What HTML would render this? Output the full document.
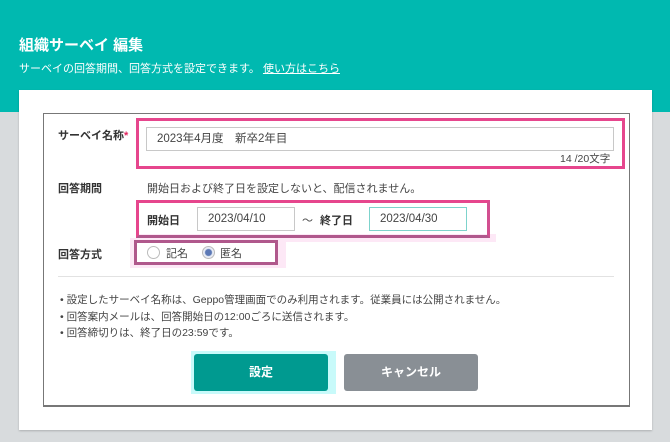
<!DOCTYPE html>
<html><head><meta charset="utf-8"><style>
*{margin:0;padding:0;box-sizing:border-box}
body{width:670px;height:442px;background:#d8dbdd;font-family:"Liberation Sans","Noto Sans CJK JP",sans-serif;position:relative;overflow:hidden;color:#333}
.abs{position:absolute}
.hdr{left:0;top:0;width:670px;height:112px;background:#00b9b0}
.card{left:19px;top:90px;width:633px;height:340px;background:#fff;box-shadow:0 1px 2px rgba(0,0,0,.2)}
.inner{left:43px;top:113px;width:587px;height:294px;border:1px solid #777;border-bottom-width:2px}
.lbl{font-size:11px;font-weight:bold;color:#333}
.txt{font-size:11px;color:#444}
.pink{border:3px solid #e6468d}
.pink2{border:3px solid #b0588c}
.inp{border:1px solid #c8c8c8;background:#fff;font-size:11.5px;color:#444;padding-left:10px;line-height:22px}
.radio{width:13px;height:13px;border-radius:50%;border:1px solid #bbb;background:#fff}
.btn{height:37px;border-radius:3px;color:#fff;font-weight:bold;font-size:12px;text-align:center;line-height:37px}
</style></head><body>
<div class="abs hdr"></div>
<div class="abs" style="left:19px;top:34px;color:#fff;font-weight:bold;font-size:15px">組織サーベイ 編集</div>
<div class="abs" style="left:19px;top:60px;color:#fff;font-size:11px">サーベイの回答期間、回答方式を設定できます。 <span style="text-decoration:underline">使い方はこちら</span></div>
<div class="abs card"></div>
<div class="abs inner"></div>
<div class="abs lbl" style="left:58px;top:127px">サーベイ名称<span style="color:#e0245e">*</span></div>
<div class="abs pink" style="left:136px;top:118px;width:489px;height:51px"></div>
<div class="abs inp" style="left:146px;top:127px;width:468px;height:24px">2023年4月度　新卒2年目</div>
<div class="abs txt" style="left:560px;top:151px;font-size:10.5px">14 /20文字</div>
<div class="abs lbl" style="left:58px;top:180px">回答期間</div>
<div class="abs txt" style="left:147px;top:180px">開始日および終了日を設定しないと、配信されません。</div>
<div class="abs" style="left:136px;top:234px;width:360px;height:8px;background:#fde8f6"></div>
<div class="abs pink" style="left:136px;top:200px;width:354px;height:38px;border-bottom-color:#b0588c;border-right-color:#d24f90"></div>
<div class="abs lbl" style="left:147px;top:212px">開始日</div>
<div class="abs inp" style="left:197px;top:207px;width:98px;height:24px">2023/04/10</div>
<div class="abs txt" style="left:302px;top:212px">〜</div>
<div class="abs lbl" style="left:320px;top:212px">終了日</div>
<div class="abs inp" style="left:369px;top:207px;width:98px;height:24px;border-color:#7dd3cc">2023/04/30</div>
<div class="abs lbl" style="left:58px;top:246px">回答方式</div>
<div class="abs" style="left:130px;top:238px;width:156px;height:30px;background:#fde8f6"></div>
<div class="abs pink2" style="left:134px;top:240px;width:144px;height:25px;background:#fff"></div>
<div class="abs radio" style="left:147px;top:246px"></div>
<div class="abs txt" style="left:166px;top:245px">記名</div>
<div class="abs radio" style="left:202px;top:246px;background:radial-gradient(circle,#5b78b5 3px,#e8ecf5 4px)"></div>
<div class="abs txt" style="left:220px;top:245px">匿名</div>
<div class="abs" style="left:58px;top:276px;width:556px;height:1px;background:#e2e2e2"></div>
<div class="abs txt" style="left:60px;top:292px;line-height:16.5px;font-size:10.5px">
• 設定したサーベイ名称は、Geppo管理画面でのみ利用されます。従業員には公開されません。<br>
• 回答案内メールは、回答開始日の12:00ごろに送信されます。<br>
• 回答締切りは、終了日の23:59です。</div>
<div class="abs" style="left:191px;top:351px;width:145px;height:43px;background:#c8fafa"></div>
<div class="abs btn" style="left:194px;top:354px;width:134px;background:#009a90">設定</div>
<div class="abs btn" style="left:344px;top:354px;width:134px;background:#898f95">キャンセル</div>
</body></html>
